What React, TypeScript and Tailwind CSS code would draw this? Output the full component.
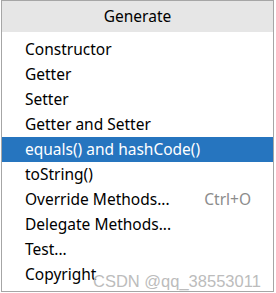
import React from "react";

const items: { label: string; shortcut?: string; active?: boolean }[] = [
  { label: "Constructor" },
  { label: "Getter" },
  { label: "Setter" },
  { label: "Getter and Setter" },
  { label: "equals() and hashCode()", active: true },
  { label: "toString()" },
  { label: "Override Methods...", shortcut: "Ctrl+O" },
  { label: "Delegate Methods..." },
  { label: "Test..." },
  { label: "Copyright" },
];

export default function App() {
  return (
    <div
      className="relative w-[276px] h-[293px] bg-white overflow-hidden"
      style={{ fontFamily: '"Noto Sans", "Open Sans", sans-serif' }}
    >
      <div className="ml-[1px] w-[273px] h-[292px] border border-[#a6a6a6] bg-white flex flex-col">
        <div className="h-[31px] bg-[#e6e6e6] flex items-center justify-center text-[15.5px] text-black">
          Generate
        </div>
        <div className="pt-[5px] flex flex-col">
          {items.map((it) => (
            <div
              key={it.label}
              className={
                it.active
                  ? "h-[25px] flex items-center pl-[23px] pr-[22px] bg-[#2675bf] text-white text-[15.5px]"
                  : "h-[25px] flex items-center pl-[23px] pr-[22px] text-black text-[15.5px]"
              }
            >
              <span className="flex-1">{it.label}</span>
              {it.shortcut && <span className="text-[#8c8c8c]">{it.shortcut}</span>}
            </div>
          ))}
        </div>
      </div>
      <div
        className="absolute left-[93px] top-[271px] text-[16.5px] leading-[20px] text-[#bcbcbc] whitespace-nowrap"
        style={{ fontFamily: '"Liberation Sans", Arial, sans-serif' }}
      >
        CSDN @qq_38553011
      </div>
    </div>
  );
}
